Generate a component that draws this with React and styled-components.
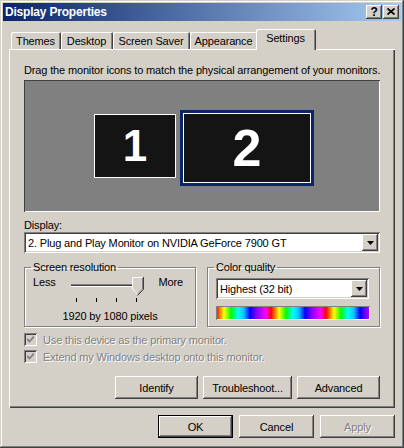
import styled, { createGlobalStyle } from "styled-components";

const GlobalStyle = createGlobalStyle`
  html, body {
    margin: 0;
    padding: 0;
    background: #d4d0c8;
  }
  body {
    font-family: "Liberation Sans", Arial, sans-serif;
    font-size: 11px;
    letter-spacing: -0.15px;
    color: #000;
  }
`

const raised = `
  box-shadow: inset -1px -1px #404040, inset 1px 1px #fff,
    inset -2px -2px #808080, inset 2px 2px #d4d0c8;
`
const sunken = `
  box-shadow: inset 1px 1px #808080, inset -1px -1px #fff,
    inset 2px 2px #404040, inset -2px -2px #d4d0c8;
`

const Window = styled.div`
  width: 404px;
  height: 448px;
  box-sizing: border-box;
  padding: 3px;
  background: #d4d0c8;
  box-shadow: inset -1px -1px #404040, inset 1px 1px #d4d0c8,
    inset -2px -2px #808080, inset 2px 2px #fff;
  display: flex;
  flex-direction: column;
`
const TitleBar = styled.div`
  height: 18px;
  display: flex;
  align-items: center;
  padding: 0 2px 0 2px;
  background: linear-gradient(to right, #0a246a, #a6caf0);
`
const TitleText = styled.span`
  flex: 1;
  color: #fff;
  font-weight: bold;
  font-size: 12px;
  letter-spacing: -0.2px;
`
const TitleButton = styled.div`
  width: 16px;
  height: 14px;
  margin-left: ${p => p.$gap || 0}px;
  box-sizing: border-box;
  background: #d4d0c8;
  ${raised}
  display: flex;
  align-items: center;
  justify-content: center;
  font-weight: bold;
  font-size: 12px;
  line-height: 1;
  padding-bottom: 1px;
`
const Body = styled.div`
  flex: 1;
  padding: 8px 6px 0;
  display: flex;
  flex-direction: column;
`
const TabRow = styled.div`
  height: 21px;
  display: flex;
  align-items: flex-end;
  padding-left: 2px;
  margin-bottom: -1px;
  position: relative;
  z-index: 1;
`
const Tab = styled.div`
  width: ${p => p.$w}px;
  height: ${p => (p.$active ? 21 : 17)}px;
  margin-bottom: ${p => (p.$active ? 0 : 1)}px;
  margin-left: ${p => (p.$active ? -2 : 0)}px;
  box-sizing: border-box;
  background: #d4d0c8;
  border-radius: 2px 2px 0 0;
  box-shadow: inset 1px 1px #fff, inset -1px 0 #404040, inset -2px 0 #808080;
  display: flex;
  align-items: center;
  justify-content: center;
  padding-bottom: ${p => (p.$active ? 4 : 0)}px;
  padding-right: 1px;
  white-space: nowrap;
`
const Panel = styled.div`
  height: 359px;
  box-sizing: border-box;
  padding: 15px 15px 0;
  background: #d4d0c8;
  box-shadow: inset 1px 1px #fff, inset -1px -1px #404040, inset -2px -2px #808080;
  display: flex;
  flex-direction: column;
`
const Line = styled.div`
  line-height: 13px;
  height: 13px;
  margin-top: ${p => p.$mt || 0}px;
  white-space: nowrap;
`
const Preview = styled.div`
  margin-top: 3px;
  height: 132px;
  background: #808080;
  box-shadow: inset 1px 1px #404040, inset -1px -1px #fff;
  display: flex;
  align-items: center;
  justify-content: center;
  gap: 4px;
  padding-left: 4px;
`
const Monitor = styled.div`
  width: ${p => p.$w}px;
  height: ${p => p.$h}px;
  box-sizing: border-box;
  background: #141414;
  border: ${p => (p.$selected ? "3px solid #0a246a" : "1px solid #fff")};
  box-shadow: ${p => (p.$selected ? "inset 0 0 0 1px #fff" : "none")};
  display: flex;
  align-items: center;
  justify-content: center;
  color: #fff;
  font-weight: bold;
  font-size: ${p => p.$size}px;
  letter-spacing: 0;
  line-height: 1;
  margin-top: ${p => (p.$selected ? 4 : 0)}px;
`
const Combo = styled.div`
  height: 21px;
  width: ${p => (p.$w ? `${p.$w}px` : "auto")};
  margin: ${p => p.$m || "0"};
  box-sizing: border-box;
  background: #fff;
  ${sunken}
  display: flex;
  align-items: center;
  padding: 2px;
`
const ComboText = styled.span`
  flex: 1;
  padding-left: 2px;
  white-space: nowrap;
`
const ArrowButton = styled.div`
  width: 16px;
  height: 17px;
  box-sizing: border-box;
  background: #d4d0c8;
  ${raised}
  display: flex;
  align-items: center;
  justify-content: center;
`
const Groups = styled.div`
  display: grid;
  grid-template-columns: 172px 173px;
  column-gap: 11px;
  margin-top: 8px;
`
const Group = styled.fieldset`
  margin: 0;
  padding: 0 0 0 6px;
  height: 66px;
  box-sizing: border-box;
  border: 1px solid #808080;
  box-shadow: 1px 1px #fff, inset 1px 1px #fff;
  min-width: 0;
`
const Legend = styled.legend`
  padding: 0 2px;
  line-height: 13px;
  white-space: nowrap;
`
const SliderRow = styled.div`
  display: flex;
  justify-content: space-between;
  align-items: flex-start;
  padding: 1px 12px 0 2px;
`
const SideLabel = styled.span`
  margin-top: 1px;
  line-height: 13px;
`
const Pixels = styled.div`
  margin: 5px 0 0 -6px;
  text-align: center;
  line-height: 13px;
`
const Spectrum = styled.div`
  margin: 7px 9px 0 2px;
  height: 14px;
  background: repeating-linear-gradient(
    to right,
    #ff0000 0px,
    #ff8000 4px,
    #ffff00 8px,
    #00ff00 15px,
    #00ffff 22px,
    #00c0ff 28px,
    #0000ff 34px,
    #8000ff 40px,
    #ff00ff 50px,
    #ff0000 55px
  );
  box-shadow: inset 1px 1px #808080, inset -1px -1px #fff;
`
const CheckRow = styled.div`
  height: 17px;
  display: flex;
  align-items: center;
  gap: 6px;
  margin-top: ${p => p.$mt || 0}px;
  color: #808080;
  text-shadow: 1px 1px #fff;
  white-space: nowrap;
`
const CheckBox = styled.div`
  width: 13px;
  height: 13px;
  box-sizing: border-box;
  background: #d4d0c8;
  ${sunken}
  display: flex;
  align-items: center;
  justify-content: center;
`
const ButtonRow = styled.div`
  display: flex;
  justify-content: flex-end;
  gap: ${p => p.$gap || 6}px;
  margin-top: ${p => p.$mt || 0}px;
`
const Button = styled.div`
  width: ${p => p.$w || 75}px;
  height: 23px;
  box-sizing: border-box;
  background: #d4d0c8;
  border: ${p => (p.$default ? "1px solid #000" : "none")};
  ${raised}
  display: flex;
  align-items: center;
  justify-content: center;
  color: ${p => (p.$disabled ? "#808080" : "#000")};
  text-shadow: ${p => (p.$disabled ? "1px 1px #fff" : "none")};
  white-space: nowrap;
`

const DownArrow = () => (
  <svg width="7" height="4" viewBox="0 0 7 4">
    <path d="M0 0H7L3.5 4Z" fill="#000" />
  </svg>
)

const CloseIcon = () => (
  <svg width="8" height="7" viewBox="0 0 8 7">
    <path d="M0.5 0.5L7.5 6.5M7.5 0.5L0.5 6.5" stroke="#000" strokeWidth="1.7" />
  </svg>
)

const Check = () => (
  <svg width="7" height="7" viewBox="0 0 7 7">
    <path d="M0 3L2.5 5.5L7 0.5" stroke="#808080" strokeWidth="1.8" fill="none" />
  </svg>
)

const Slider = () => (
  <svg width="76" height="30" viewBox="0 0 76 30">
    <rect x="2" y="9" width="72" height="1" fill="#808080" />
    <rect x="2" y="10" width="72" height="1" fill="#404040" />
    <rect x="2" y="11" width="72" height="1" fill="#fff" />
    {[7, 27, 47, 67].map(x => (
      <rect key={x} x={x} y="23" width="1" height="4" fill="#000" />
    ))}
    <path d="M63 2H74V14L68.5 19.5L63 14Z" fill="#d4d0c8" />
    <path d="M63.5 14V2.5H73.5" stroke="#fff" fill="none" />
    <path d="M63.5 14L68.5 19" stroke="#fff" fill="none" />
    <path d="M74.5 2V14.5L68.5 20.5" stroke="#404040" fill="none" />
    <path d="M73.5 3V14L68.5 19" stroke="#808080" fill="none" />
  </svg>
)

const tabs = [
  { label: "Themes", w: 50 },
  { label: "Desktop", w: 52 },
  { label: "Screen Saver", w: 77 },
  { label: "Appearance", w: 68 },
  { label: "Settings", w: 60, active: true },
]

export default function App() {
  return (
    <>
      <GlobalStyle />
      <Window>
        <TitleBar>
          <TitleText>Display Properties</TitleText>
          <TitleButton>?</TitleButton>
          <TitleButton $gap={1}>
            <CloseIcon />
          </TitleButton>
        </TitleBar>
        <Body>
          <TabRow>
            {tabs.map(t => (
              <Tab key={t.label} $w={t.w} $active={t.active}>
                {t.label}
              </Tab>
            ))}
          </TabRow>
          <Panel>
            <Line>Drag the monitor icons to match the physical arrangement of your monitors.</Line>
            <Preview>
              <Monitor $w={82} $h={64} $size={44}>1</Monitor>
              <Monitor $w={134} $h={76} $size={52} $selected>2</Monitor>
            </Preview>
            <Line $mt={7}>Display:</Line>
            <Combo>
              <ComboText>2. Plug and Play Monitor on NVIDIA GeForce 7900 GT</ComboText>
              <ArrowButton>
                <DownArrow />
              </ArrowButton>
            </Combo>
            <Groups>
              <Group>
                <Legend>Screen resolution</Legend>
                <SliderRow>
                  <SideLabel>Less</SideLabel>
                  <Slider />
                  <SideLabel>More</SideLabel>
                </SliderRow>
                <Pixels>1920 by 1080 pixels</Pixels>
              </Group>
              <Group>
                <Legend>Color quality</Legend>
                <Combo $w={153} $m="4px 0 0 2px">
                  <ComboText>Highest (32 bit)</ComboText>
                  <ArrowButton>
                    <DownArrow />
                  </ArrowButton>
                </Combo>
                <Spectrum />
              </Group>
            </Groups>
            <CheckRow $mt={4}>
              <CheckBox>
                <Check />
              </CheckBox>
              Use this device as the primary monitor.
            </CheckRow>
            <CheckRow>
              <CheckBox>
                <Check />
              </CheckBox>
              Extend my Windows desktop onto this monitor.
            </CheckRow>
            <ButtonRow $mt={11} $gap={5}>
              <Button $w={83}>Identify</Button>
              <Button $w={89}>Troubleshoot...</Button>
              <Button $w={83}>Advanced</Button>
            </ButtonRow>
          </Panel>
          <ButtonRow $mt={7}>
            <Button $default>OK</Button>
            <Button>Cancel</Button>
            <Button $disabled>Apply</Button>
          </ButtonRow>
        </Body>
      </Window>
    </>
  )
}
